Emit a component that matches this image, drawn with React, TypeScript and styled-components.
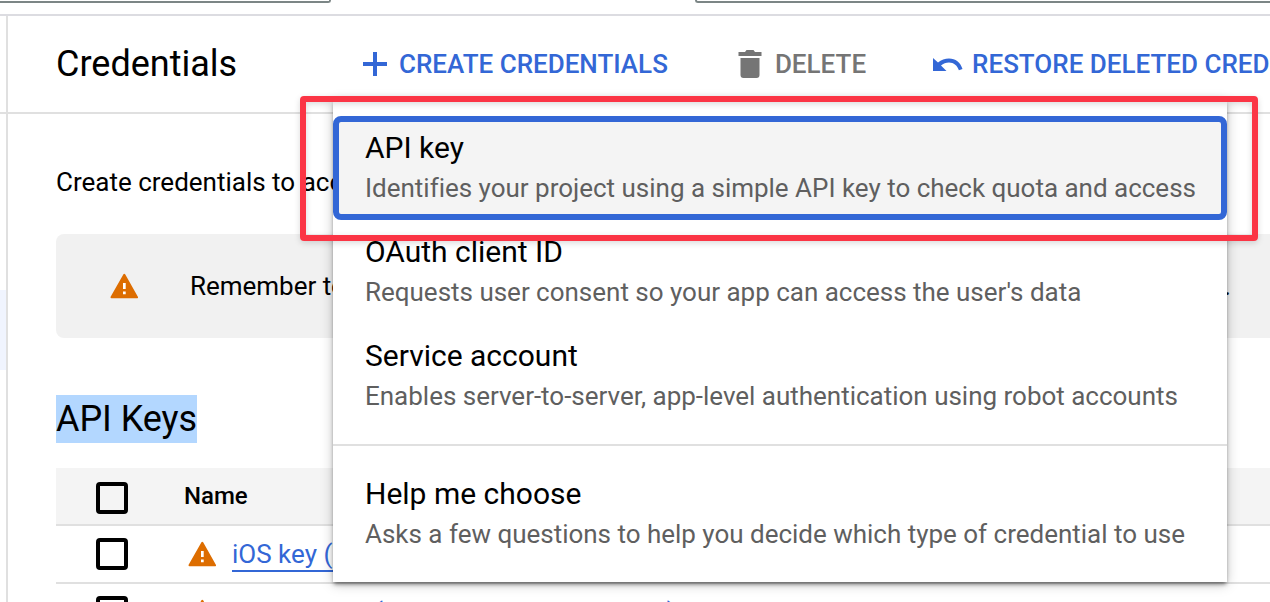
import styled, { createGlobalStyle } from "styled-components";

const GlobalStyle = createGlobalStyle`
  * {
    box-sizing: border-box;
  }

  body {
    margin: 0;
    overflow: hidden;
    background: #fff;
    color: #000;
    font-family: Roboto, "Liberation Sans", sans-serif;
  }
`;

const Page = styled.div`
  width: 1270px;
  height: 602px;
  overflow: hidden;
  display: flex;
  flex-direction: column;
`;

const TopBar = styled.div`
  flex: none;
  height: 16px;
  display: flex;
  justify-content: space-between;
  align-items: flex-start;
  border-bottom: 2px solid #dcdce1;
`;

const TopBox = styled.div<{ $side: "left" | "right" }>`
  width: ${(p) => (p.$side === "left" ? "331px" : "575px")};
  height: 3px;
  border-bottom: 2px solid #7c8686;
  border-${(p) => (p.$side === "left" ? "right" : "left")}: 2px solid #7c8686;
  border-bottom-${(p) => (p.$side === "left" ? "right" : "left")}-radius: 5px;
`;

const Body = styled.div`
  flex: 1;
  display: flex;
  min-height: 0;
`;

const Sidebar = styled.div`
  flex: none;
  width: 8px;
  border-right: 2px solid #e0e0e0;
`;

const SidebarTitle = styled.div`
  height: 98px;
  border-bottom: 2px solid #e0e0e0;
`;

const SidebarActive = styled.div`
  height: 80px;
  margin-top: 176px;
  background: #f0f4fe;
`;

const Main = styled.div`
  flex: 1;
  min-width: 0;
`;

const Header = styled.div`
  position: relative;
  height: 98px;
  padding-left: 48px;
  display: flex;
  align-items: center;
  border-bottom: 2px solid #e0e0e0;
  white-space: nowrap;
`;

const PageTitle = styled.h1`
  flex: none;
  width: 307px;
  margin: 0;
  font-size: 36px;
  font-weight: 400;
  line-height: 48px;
`;

const ToolButton = styled.div<{ $disabled?: boolean; $gap: number; $after?: number }>`
  flex: none;
  display: flex;
  align-items: center;
  gap: ${(p) => p.$gap}px;
  margin-right: ${(p) => p.$after || 0}px;
  color: ${(p) => (p.$disabled ? "#757575" : "#3367d6")};
  font-size: 26px;
  font-weight: 500;
  line-height: 32px;
`;

const Content = styled.div`
  padding-left: 48px;
`;

const Intro = styled.p`
  margin: 0;
  padding-top: 52px;
  font-size: 26px;
  line-height: 32px;
  white-space: nowrap;
`;

const Notice = styled.div`
  height: 104px;
  margin-top: 36px;
  padding-left: 54px;
  display: flex;
  align-items: center;
  gap: 52px;
  border-radius: 8px 0 0 8px;
  background: #f1f1f1;
  font-size: 26px;
  letter-spacing: -0.02px;
  white-space: nowrap;
`;

const SectionTitle = styled.h2`
  margin: 57px 0 25px;
  font-size: 36px;
  font-weight: 400;
  line-height: 48px;
`;

const Highlight = styled.span`
  display: inline-block;
  width: 141px;
  background: #b3d7ff;
  letter-spacing: -0.06px;
  white-space: nowrap;
`;

const Row = styled.div<{ $head?: boolean }>`
  height: 58px;
  padding-left: 40px;
  display: flex;
  align-items: center;
  border-bottom: 2px solid #e0e0e0;
  background: ${(p) => (p.$head ? "#f4f4f4" : "#fff")};
  white-space: nowrap;
`;

const Checkbox = styled.span<{ $low?: boolean }>`
  width: 32px;
  height: 32px;
  margin-top: ${(p) => (p.$low ? "3px" : "0")};
  border: 4px solid #000;
  border-radius: 4px;
`;

const ColumnName = styled.span`
  margin-left: 56px;
  font-size: 24px;
  font-weight: 500;
`;

const RowIcon = styled.span`
  display: flex;
  margin: 0 16px 0 60px;
`;

const KeyLink = styled.a`
  margin-top: 2px;
  color: #3367d6;
  border-bottom: 2px solid #3367d6;
  font-size: 26px;
  line-height: 32px;
`;

const Menu = styled.div`
  position: absolute;
  top: 84px;
  left: 325px;
  width: 894px;
  height: 482px;
  padding: 16px 0;
  background: #fff;
  box-shadow: 0 3px 4px -1px rgba(0, 0, 0, 0.5), 0 2px 12px rgba(0, 0, 0, 0.22);
`;

const MenuItem = styled.div<{ $focused?: boolean }>`
  height: 104px;
  padding: 6px 26px;
  border: 6px solid ${(p) => (p.$focused ? "#3367d6" : "transparent")};
  border-radius: 8px;
  background: ${(p) => (p.$focused ? "#f4f4f4" : "transparent")};
`;

const ItemTitle = styled.div`
  font-size: 30px;
  line-height: 40px;
`;

const ItemText = styled.div`
  color: #5f5f5f;
  font-size: 26px;
  line-height: 40px;
  letter-spacing: -0.013px;
`;

const Divider = styled.div`
  height: 2px;
  margin: 16px 0;
  background: #e0e0e0;
`;

const RedFrame = styled.div`
  position: absolute;
  top: 80px;
  left: 292px;
  width: 958px;
  height: 145px;
  border: 6px solid #fb3545;
  border-radius: 4px;
  box-shadow: 0 2px 6px rgba(0, 0, 0, 0.15), inset 0 2px 6px rgba(0, 0, 0, 0.15);
`;

function WarningIcon() {
  return (
    <svg width="28" height="26" viewBox="0 0 28 26">
      <path d="M14.300 1.800 27 24.300h-25.500z" fill="#dd6d00" stroke="#dd6d00" strokeWidth="2" strokeLinejoin="round" />
      <path d="M13 10h2.700v6H13zM13 18.500h2.700v2.700H13z" fill="#fff" />
    </svg>
  );
}

function PlusIcon() {
  return (
    <svg width="24" height="24" viewBox="0 0 24 24" fill="currentColor">
      <path d="M10 0h4v10h10v4H14v10h-4V14H0v-4h10z" />
    </svg>
  );
}

function TrashIcon() {
  return (
    <svg width="24" height="28" viewBox="0 0 24 28" fill="currentColor">
      <path d="M.5 2H7l1.500-2h7L17 2h6.500v4H.5zM2.500 8H21.500v17a3 3 0 0 1-3 3h-13a3 3 0 0 1-3-3z" />
    </svg>
  );
}

function UndoIcon() {
  return (
    <svg width="30" height="15" viewBox="0 0 30 15" fill="currentColor">
      <path d="M0 1l5 4.600C8.200 3 12 1.500 16 1.500c6.500 0 11.500 4 13.500 10.500l-3.600 1.300C24.500 8.500 20.800 5.400 16 5.400c-3 0-5.700 1-8 3L13.500 14H0z" />
    </svg>
  );
}

const items = [
  {
    title: "API key",
    text: "Identifies your project using a simple API key to check quota and access",
  },
  {
    title: "OAuth client ID",
    text: "Requests user consent so your app can access the user's data",
  },
  {
    title: "Service account",
    text: "Enables server-to-server, app-level authentication using robot accounts",
  },
];

const keys = [
  "iOS key (auto created by Firebase)",
  "Android key (auto created by Firebase)",
];

function CredentialMenu() {
  return (
    <Menu>
      {items.map((item, i) => (
        <MenuItem key={item.title} $focused={i === 0}>
          <ItemTitle>{item.title}</ItemTitle>
          <ItemText>{item.text}</ItemText>
        </MenuItem>
      ))}
      <Divider />
      <MenuItem>
        <ItemTitle>Help me choose</ItemTitle>
        <ItemText>
          Asks a few questions to help you decide which type of credential to use
        </ItemText>
      </MenuItem>
    </Menu>
  );
}

function App() {
  return (
    <Page>
      <GlobalStyle />
      <TopBar>
        <TopBox $side="left" />
        <TopBox $side="right" />
      </TopBar>
      <Body>
        <Sidebar>
          <SidebarTitle />
          <SidebarActive />
        </Sidebar>
        <Main>
          <Header>
            <PageTitle>Credentials</PageTitle>
            <ToolButton $gap={12} $after={70}>
              <PlusIcon />
              CREATE CREDENTIALS
            </ToolButton>
            <ToolButton $disabled $gap={13} $after={67}>
              <TrashIcon />
              DELETE
            </ToolButton>
            <ToolButton $gap={9}>
              <UndoIcon />
              RESTORE DELETED CREDENTIALS
            </ToolButton>
            <CredentialMenu />
            <RedFrame />
          </Header>
          <Content>
            <Intro>Create credentials to access your enabled APIs</Intro>
            <Notice>
              <WarningIcon />
              Remember to configure the OAuth consent screen with information about your application.
            </Notice>
            <SectionTitle>
              <Highlight>API Keys</Highlight>
            </SectionTitle>
            <Row $head>
              <Checkbox $low />
              <ColumnName>Name</ColumnName>
            </Row>
            {keys.map((name) => (
              <Row key={name}>
                <Checkbox />
                <RowIcon>
                  <WarningIcon />
                </RowIcon>
                <KeyLink>{name}</KeyLink>
              </Row>
            ))}
          </Content>
        </Main>
      </Body>
    </Page>
  );
}

export default App;
